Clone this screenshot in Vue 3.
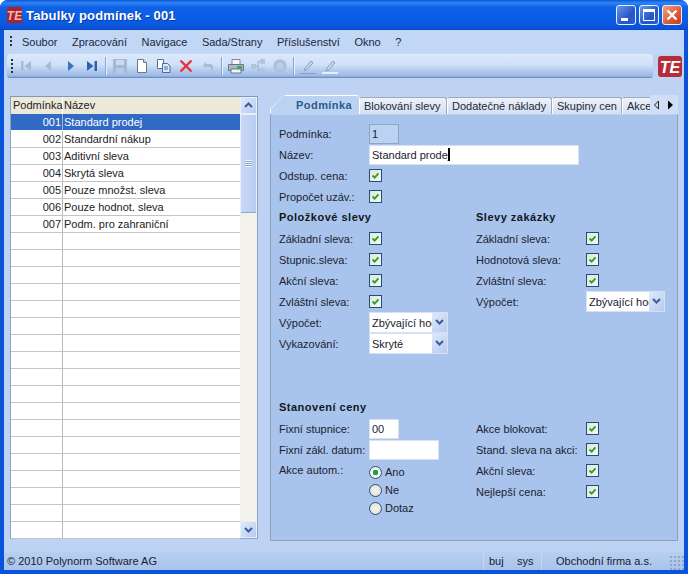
<template>
  <div class="window">
    <div class="titlebar">
      <svg class="app-icon" viewBox="0 0 15 16">
        <rect x="0" y="0" width="15" height="16" rx="1" fill="#a8232a" />
        <text x="7.5" y="12.5" text-anchor="middle" font-size="12" font-weight="700" font-style="italic" fill="#f0b8b8" font-family="Liberation Sans, sans-serif">TE</text>
      </svg>
      <span class="title-text">Tabulky podmínek - 001</span>
      <div class="win-buttons">
        <div class="win-btn"><span class="min-glyph"></span></div>
        <div class="win-btn"><span class="max-glyph"></span></div>
        <div class="win-btn close">
          <svg viewBox="0 0 20 20" width="20" height="20"><path d="M5.5 5.5l9 9M14.5 5.5l-9 9" stroke="#fff" stroke-width="2.4" /></svg>
        </div>
      </div>
    </div>

    <div class="client">
      <div class="menubar">
        <span class="grip"></span>
        <span v-for="m in menus" :key="m" class="menu-item">{{ m }}</span>
      </div>

      <div class="toolrow">
        <div class="toolbar">
          <span class="grip tool-grip"></span>
          <span class="tool"><svg viewBox="0 0 16 16"><path d="M3 3h2.500v10H3zM13 3v10L6.500 8z" fill="#a6bbd9" /></svg></span>
          <span class="tool"><svg viewBox="0 0 16 16"><path d="M11 3v10L5 8z" fill="#a6bbd9" /></svg></span>
          <span class="tool"><svg viewBox="0 0 16 16"><path d="M6 3v10l6-5z" fill="#3a74c0" /></svg></span>
          <span class="tool"><svg viewBox="0 0 16 16"><path d="M3 3v10l6.500-5zM10.500 3H13v10h-2.500z" fill="#2a64b0" /></svg></span>
          <span class="tool-sep"></span>
          <span class="tool"><svg viewBox="0 0 16 16"><path d="M1 1h14v14H1z" fill="#a3b9d7" /><path d="M4 2h8v5H4z" fill="#cddbee" /><path d="M4 10h8v5H4z" fill="#b7c9e1" /></svg></span>
          <span class="tool"><svg viewBox="0 0 16 16"><path d="M3.500 1.500h6l3 3v10h-9z" fill="#fff" stroke="#6a7a90" /><path d="M9.500 1.500v3h3" fill="#dde" stroke="#6a7a90" /></svg></span>
          <span class="tool"><svg viewBox="0 0 16 16"><path d="M1.500 1.500h6v9h-6z" fill="#fff" stroke="#5c6f90" /><path d="M6.500 5.500h5l2.500 2.500v6.500h-7.500z" fill="#dfe9f7" stroke="#4b6ba6" /><path d="M8 9h4M8 11h4" stroke="#4b6ba6" /></svg></span>
          <span class="tool"><svg viewBox="0 0 16 16"><path d="M2.500 2.500l11 11M13.500 2.500l-11 11" stroke="#e8323a" stroke-width="2.400" /></svg></span>
          <span class="tool"><svg viewBox="0 0 16 16"><path d="M3 7l3-3v2h4c2 0 3 1.500 3 3.500 0 1.500-1 3-2 3.500 .5-1.500 0-4-2-4H6v2z" fill="#a6bbd9" /></svg></span>
          <span class="tool-sep"></span>
          <span class="tool"><svg viewBox="0 0 16 16"><path d="M4 1.500h8v5H4z" fill="#f4f6fa" stroke="#7a8a9c" /><path d="M.500 6.500h15v6H.500z" fill="#aab8c8" stroke="#66768a" /><path d="M3 11h10v4H3z" fill="#f2f5f9" stroke="#66768a" /><path d="M9 8h5v3H9z" fill="#38ae55" /></svg></span>
          <span class="tool"><svg viewBox="0 0 16 16"><path d="M1 6h5v5H1zM10 1h5v5h-5zM10 10h5v5h-5z" fill="#b2c5df" /><path d="M6 8h2V3.500h2M8 8v4.500h2" fill="none" stroke="#98b0cf" /></svg></span>
          <span class="tool"><svg viewBox="0 0 16 16"><circle cx="8" cy="8" r="6.800" fill="#aec1da" /><circle cx="8" cy="8" r="3.500" fill="#bccde3" /></svg></span>
          <span class="tool-sep"></span>
          <span class="tool"><svg viewBox="0 0 16 16"><path d="M5 10l6-7 2 1.800-6 7-3 1z" fill="#c6d6ec" stroke="#8a9fbf" /><path d="M0 15h16v1.500H0z" fill="#8a9fbf" /></svg></span>
          <span class="tool"><svg viewBox="0 0 16 16"><path d="M5 10l6-7 2 1.800-6 7-3 1z" fill="#c6d6ec" stroke="#8a9fbf" /><path d="M0 14h16v2.500H0z" fill="#e6eefa" /></svg></span>
        </div>
        <svg class="brand" viewBox="0 0 24 21">
          <rect x="0" y="0" width="24" height="21" rx="3" fill="#b52c3a" />
          <text x="12" y="16.500" text-anchor="middle" font-size="16" font-weight="700" font-style="italic" fill="#fff" font-family="Liberation Sans, sans-serif">TE</text>
        </svg>
      </div>

      <div class="main">
        <div class="list">
          <div class="list-table">
            <div class="list-row head">
              <span class="col-code head-code">Podmínka</span>
              <span class="col-name">Název</span>
            </div>
            <div v-for="(r, i) in rows" :key="i" class="list-row" :class="{ selected: i === 0 }">
              <span class="col-code">{{ r[0] }}</span>
              <span class="col-name">{{ r[1] }}</span>
            </div>
          </div>
          <div class="scrollbar">
            <div class="sb-btn">
              <svg viewBox="0 0 17 17" width="17" height="17"><path d="M5 10l3.500-3.500L12 10" fill="none" stroke="#3e5d92" stroke-width="2" /></svg>
            </div>
            <div class="sb-thumb"><span class="thumb-grip"></span></div>
            <div class="sb-track"></div>
            <div class="sb-btn">
              <svg viewBox="0 0 17 17" width="17" height="17"><path d="M5 7l3.500 3.500L12 7" fill="none" stroke="#3e5d92" stroke-width="2" /></svg>
            </div>
          </div>
        </div>

        <div class="tabs">
          <div class="tab-strip">
            <div class="tab active">
              <svg class="tab-slant" viewBox="0 0 15 18" width="15" height="18"><path d="M0 18V14L13 0h2v18z" fill="#bcd2f3" /><path d="M.500 18V14L13.500 .500" fill="none" stroke="#fff" /></svg>
              <span>Podmínka</span>
            </div>
            <div class="tab t-block">Blokování slevy</div>
            <div class="tab t-costs">Dodatečné náklady</div>
            <div class="tab t-groups">Skupiny cen</div>
            <div class="tab last">Akce</div>
            <div class="tab-arrows">
              <svg viewBox="0 0 24 12" width="24" height="12"><path d="M6.500 2v8l-4-4z" fill="none" stroke="#222" /><path d="M16 1.500l5 4.500-5 4.500z" fill="#000" /></svg>
            </div>
          </div>

          <div class="panel">
            <div class="row"><label>Podmínka:</label><div class="box readonly small">1</div></div>
            <div class="row"><label>Název:</label><div class="box wide">Standard prodej<i class="caret"></i></div></div>
            <div class="row"><label>Odstup. cena:</label><span class="cb"><svg viewBox="0 0 13 13"><path d="M3 6.500l2.500 2.500 4.500-5" /></svg></span></div>
            <div class="row"><label>Propočet uzáv.:</label><span class="cb"><svg viewBox="0 0 13 13"><path d="M3 6.500l2.500 2.500 4.500-5" /></svg></span></div>

            <div class="columns">
              <div class="col">
                <h4>Položkové slevy</h4>
                <div v-for="l in itemDiscounts" :key="l" class="row">
                  <label>{{ l }}</label>
                  <span class="cb"><svg viewBox="0 0 13 13"><path d="M3 6.500l2.500 2.500 4.500-5" /></svg></span>
                </div>
                <div class="row">
                  <label>Výpočet:</label>
                  <div class="combo"><span class="combo-text">Zbývající hodnota</span><span class="combo-btn"><svg viewBox="0 0 15 19" width="15" height="19"><path d="M4 7l3.500 3.500L11 7" fill="none" stroke="#3e5d92" stroke-width="2" /></svg></span></div>
                </div>
                <div class="row">
                  <label>Vykazování:</label>
                  <div class="combo"><span class="combo-text">Skryté</span><span class="combo-btn"><svg viewBox="0 0 15 19" width="15" height="19"><path d="M4 7l3.500 3.500L11 7" fill="none" stroke="#3e5d92" stroke-width="2" /></svg></span></div>
                </div>
              </div>
              <div class="col right">
                <h4>Slevy zakázky</h4>
                <div v-for="l in orderDiscounts" :key="l" class="row">
                  <label>{{ l }}</label>
                  <span class="cb"><svg viewBox="0 0 13 13"><path d="M3 6.500l2.500 2.500 4.500-5" /></svg></span>
                </div>
                <div class="row">
                  <label>Výpočet:</label>
                  <div class="combo"><span class="combo-text">Zbývající hodnota</span><span class="combo-btn"><svg viewBox="0 0 15 19" width="15" height="19"><path d="M4 7l3.500 3.500L11 7" fill="none" stroke="#3e5d92" stroke-width="2" /></svg></span></div>
                </div>
              </div>
            </div>

            <div class="columns pricing">
              <div class="col">
                <h4>Stanovení ceny</h4>
                <div class="row"><label>Fixní stupnice:</label><div class="box small">00</div></div>
                <div class="row"><label>Fixní zákl. datum:</label><div class="box date"></div></div>
                <div class="radio-row">
                  <label>Akce autom.:</label>
                  <div class="radios">
                    <div v-for="(o, i) in radios" :key="o" class="radio-item">
                      <span class="radio" :class="{ on: i === 0 }"></span>{{ o }}
                    </div>
                  </div>
                </div>
              </div>
              <div class="col right">
                <h4 class="empty-head"></h4>
                <div v-for="l in pricing" :key="l" class="row">
                  <label>{{ l }}</label>
                  <span class="cb"><svg viewBox="0 0 13 13"><path d="M3 6.500l2.500 2.500 4.500-5" /></svg></span>
                </div>
              </div>
            </div>
          </div>
        </div>
      </div>

      <div class="statusbar">
        <span class="copyright">© 2010 Polynorm Software AG</span>
        <span class="st st-user">buj</span>
        <span class="st st-sys">sys</span>
        <span class="st st-firm">Obchodní firma a.s.</span>
        <span class="size-grip"></span>
      </div>
    </div>
  </div>
</template>

<script setup>
const menus = ['Soubor', 'Zpracování', 'Navigace', 'Sada/Strany', 'Příslušenství', 'Okno', '?']

const names = [
  'Standard prodej',
  'Standardní nákup',
  'Aditivní sleva',
  'Skrytá sleva',
  'Pouze množst. sleva',
  'Pouze hodnot. sleva',
  'Podm. pro zahraniční',
]
const rows = Array.from({ length: 25 }, (_, i) =>
  names[i] ? ['00' + (i + 1), names[i]] : ['', '']
)

const itemDiscounts = ['Základní sleva:', 'Stupnic.sleva:', 'Akční sleva:', 'Zvláštní sleva:']
const orderDiscounts = ['Základní sleva:', 'Hodnotová sleva:', 'Zvláštní sleva:']
const pricing = ['Akce blokovat:', 'Stand. sleva na akci:', 'Akční sleva:', 'Nejlepší cena:']
const radios = ['Ano', 'Ne', 'Dotaz']
</script>

<style>
html, body { margin: 0; background: #fff; }
</style>

<style scoped>
.window {
  width: 688px;
  height: 574px;
  display: flex;
  flex-direction: column;
  font-family: "Liberation Sans", Arial, sans-serif;
  font-size: 11px;
  color: #1a2230;
  background: #0a54dc;
  border-radius: 8px 8px 0 0;
  overflow: hidden;
}

.titlebar {
  height: 30px;
  flex: none;
  display: flex;
  align-items: center;
  padding: 0 6px 0 7px;
  background: linear-gradient(#0a57d8 0, #2f86f6 3px, #0f62e6 7px, #0a5be4 22px, #0a50d4 29px, #0440b8 30px);
}
.app-icon { width: 15px; height: 16px; margin-right: 4px; }
.title-text {
  font-size: 13px;
  font-weight: 700;
  letter-spacing: .15px;
  color: #fff;
  text-shadow: 1px 1px 0 #0a3aa0;
}
.win-buttons { margin-left: auto; display: flex; gap: 3px; }
.win-btn {
  width: 20px;
  height: 20px;
  box-sizing: border-box;
  border: 1px solid #e8f0ff;
  border-radius: 3px;
  background: linear-gradient(135deg, #6e97ea, #2456c8 60%, #2a5cd8);
  position: relative;
  overflow: hidden;
}
.win-btn.close { background: linear-gradient(135deg, #f0a08a, #dd5a36 60%, #c83c18); }
.win-btn.close svg { position: absolute; left: -1px; top: -1px; }
.min-glyph { position: absolute; left: 4px; bottom: 3px; width: 7px; height: 3px; background: #fff; }
.max-glyph { position: absolute; left: 3px; top: 3px; width: 12px; height: 12px; box-sizing: border-box; border: 1px solid #fff; border-top-width: 3px; }

.client {
  flex: 1;
  min-height: 0;
  margin: 0 4px 4px;
  background: #bed3f4;
  display: flex;
  flex-direction: column;
}

.menubar {
  height: 24px;
  flex: none;
  display: flex;
  align-items: center;
  padding-left: 18px;
  gap: 14.500px;
  position: relative;
  background: #c2d6f5;
}
.menu-item { color: #1a2a40; }
.grip {
  position: absolute;
  left: 6px;
  top: 6px;
  width: 2px;
  height: 12px;
  background: repeating-linear-gradient(#24324c 0 2px, transparent 2px 4px);
}

.toolrow {
  height: 24px;
  flex: none;
  display: flex;
  align-items: center;
  padding: 0 2px 0 3px;
}
.toolbar {
  flex: 1;
  height: 24px;
  display: flex;
  align-items: center;
  padding-left: 8px;
  position: relative;
  background: linear-gradient(#dde9fb, #cfe0f8 45%, #9bb8e4 92%, #5f84b8);
  border-radius: 3px;
  margin-right: 5px;
}
.tool-grip { left: 4px; top: 5px; height: 14px; }
.tool {
  width: 22px;
  height: 22px;
  display: flex;
  align-items: center;
  justify-content: center;
}
.tool svg { width: 16px; height: 16px; }
.tool-sep {
  width: 1px;
  height: 18px;
  margin: 0 3px 0 2px;
  background: #8ba6cc;
  box-shadow: 1px 0 0 #e6f0fc;
}
.brand { width: 24px; height: 21px; flex: none; }

.main {
  flex: 1;
  min-height: 0;
  display: flex;
  padding: 18px 6px 0 6px;
  gap: 12px;
}

.list {
  width: 248px;
  height: 443px;
  flex: none;
  display: flex;
  border: 1px solid #8fa4c0;
  box-sizing: border-box;
  background: #fff;
  border-top-color: #7f97b8;
}
.list-table { flex: 1; min-width: 0; }
.list-row {
  height: 17px;
  display: flex;
  align-items: stretch;
  box-sizing: border-box;
  border-bottom: 1px solid #c4c4c4;
  line-height: 16px;
  color: #222;
}
.list-row.head { background: #ece9d8; border-bottom: 0; }
.col-code {
  width: 52px;
  box-sizing: border-box;
  text-align: right;
  padding-right: 1px;
  border-right: 1px solid #b8b8b8;
  white-space: nowrap;
}
.head-code { text-align: left; padding: 0 0 0 2px; border-right-color: #fff; }
.col-name { flex: 1; padding-left: 1px; white-space: nowrap; }
.list-row.selected { background: #316ac5; color: #fff; border-bottom-color: #fff; }
.list-row.selected .col-code { border-right-color: #9ab8e4; }

.scrollbar {
  width: 17px;
  flex: none;
  display: flex;
  flex-direction: column;
  background: #f3f1ec;
}
.sb-btn {
  height: 17px;
  flex: none;
  background: linear-gradient(135deg, #dfe9fb, #b6caf0);
  box-sizing: border-box;
  border: 1px solid #e8eefb;
}
.sb-btn svg { display: block; margin: -1px; }
.sb-thumb {
  height: 99px;
  flex: none;
  box-sizing: border-box;
  border: 1px solid #e8eefb;
  border-bottom-color: #8ba6cc;
  border-radius: 2px;
  background: linear-gradient(90deg, #c9d9f6, #b8ccf2);
  display: flex;
  align-items: center;
  justify-content: center;
}
.thumb-grip {
  width: 7px;
  height: 7px;
  background: repeating-linear-gradient(#eef3fc 0 1px, #8ba6cc 1px 2px);
}
.sb-track { flex: 1; }

.tabs {
  flex: 1;
  min-width: 0;
  display: flex;
  flex-direction: column;
  height: 446px;
  margin-top: -1px;
}
.tab-strip {
  height: 19px;
  flex: none;
  display: flex;
  align-items: flex-end;
  position: relative;
}
.tab {
  height: 17px;
  box-sizing: border-box;
  padding: 0 0 0 4px;
  line-height: 16px;
  white-space: nowrap;
  background: linear-gradient(#eef2fa, #d4dff0);
  border: 1px solid #9caabe;
  border-bottom: 0;
  border-left-color: #fff;
  border-radius: 3px 3px 0 0;
  color: #1d2a3c;
}
.t-block { width: 88px; }
.t-costs { width: 105px; }
.t-groups { width: 70px; }
.tab.active {
  height: 19px;
  width: 89px;
  padding: 0 0 0 26px;
  background: #bcd2f3;
  border: 0;
  border-top: 1px solid #fff;
  line-height: 18px;
  font-weight: 700;
  letter-spacing: .45px;
  color: #2d5a8a;
  position: relative;
  clip-path: polygon(14px 0, 100% 0, 100% 100%, 0 100%, 0 14px);
}
.tab-slant { position: absolute; left: 0; top: -1px; }
.tab.last { width: 28px; overflow: hidden; border-right: 0; border-radius: 3px 0 0 0; }
.tab-arrows {
  flex: 1;
  height: 19px;
  display: flex;
  align-items: center;
  justify-content: center;
  background: #cfdef6;
}

.panel {
  flex: 1;
  min-height: 0;
  box-sizing: border-box;
  background: #a9c4ec;
  border: 1px solid #8ea2bc;
  border-top-color: #bcd2f3;
  padding: 8px 0 0 8px;
}

.row {
  height: 21px;
  display: flex;
  align-items: center;
}
.row label, .radio-row label {
  width: 90px;
  flex: none;
  color: #1a2230;
  white-space: nowrap;
}
.columns { display: flex; }
.col { width: 197px; flex: none; }
.col.right label { width: 110px; }
h4 {
  margin: 0;
  height: 21px;
  line-height: 21px;
  font-size: 11px;
  font-weight: 700;
  letter-spacing: .5px;
  color: #101820;
}
.pricing { margin-top: 43px; }

.box {
  height: 20px;
  box-sizing: border-box;
  background: #fff;
  border: 1px solid #d6e2f4;
  padding-left: 2px;
  line-height: 18px;
  white-space: nowrap;
}
.box.small { width: 30px; }
.box.wide { width: 210px; }
.box.date { width: 70px; }
.box.readonly { background: #bcd2f3; border-color: #8ea6c6; }
.caret {
  display: inline-block;
  width: 2px;
  height: 13px;
  margin-left: -2px;
  vertical-align: -2px;
  background: #000;
}

.cb {
  width: 13px;
  height: 13px;
  box-sizing: border-box;
  border: 1px solid #1f4f7c;
  background: linear-gradient(135deg, #dfe8dc, #f6f8f2);
  display: block;
}
.cb svg { display: block; width: 11px; height: 11px; margin: 0; }
.cb path { fill: none; stroke: #2ea02e; stroke-width: 2.2; }

.combo {
  width: 79px;
  height: 21px;
  box-sizing: border-box;
  border: 1px solid #d6e2f4;
  background: #fff;
  display: flex;
  align-items: center;
  padding-left: 2px;
}
.combo-text { flex: 1; min-width: 0; overflow: hidden; white-space: nowrap; }
.combo-btn {
  width: 15px;
  height: 19px;
  flex: none;
  background: linear-gradient(135deg, #dfe9fb, #b6caf0);
}
.combo-btn svg { display: block; }

.radio-row { display: flex; padding-top: 3px; }
.radio-row label { line-height: 14px; }
.radio-item { height: 18px; display: flex; align-items: center; gap: 3px; }
.radio {
  width: 13px;
  height: 13px;
  box-sizing: border-box;
  border: 1px solid #2a4f80;
  border-radius: 50%;
  background: radial-gradient(#f6f6f0, #dcdcd0);
  display: block;
}
.radio.on { background: radial-gradient(#22a03a 0 2.500px, #f6f6f0 3px); }
.empty-head { visibility: hidden; }

.statusbar {
  height: 18px;
  flex: none;
  margin-top: auto;
  display: flex;
  align-items: center;
  position: relative;
  padding-left: 3px;
  background: linear-gradient(#b8cff1, #a8c3eb);
  color: #1a2230;
}
.copyright { flex: 1; }
.st { box-sizing: border-box; border-left: 1px solid #c3d6f4; height: 18px; line-height: 18px; white-space: nowrap; }
.st-user { width: 28px; padding-left: 5px; }
.st-sys { width: 30px; padding-left: 6px; border-left: 0; }
.st-firm { width: 128px; padding-left: 14px; }
.size-grip {
  width: 15px;
  height: 15px;
  align-self: flex-end;
  background: radial-gradient(circle, #8ea6c6 1px, transparent 1.500px) 0 0 / 4px 4px;
}
</style>
